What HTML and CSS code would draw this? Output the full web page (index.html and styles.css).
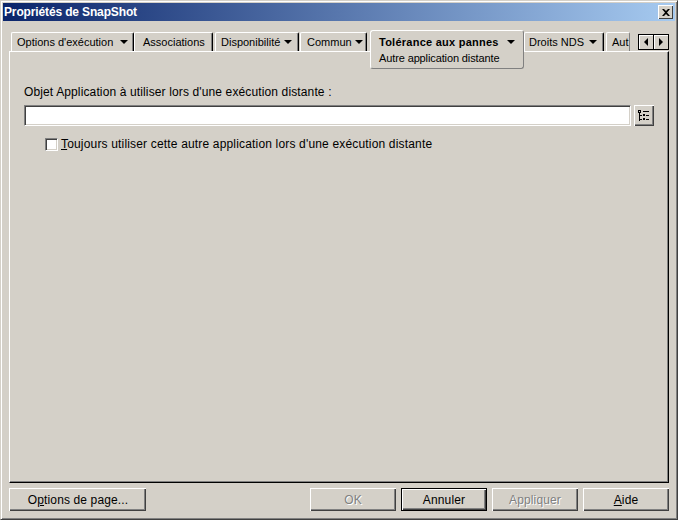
FILE: index.html
```html
<!DOCTYPE html>
<html lang="fr">
<head>
  <meta charset="UTF-8">
  <title>Propriétés de SnapShot</title>
  <link rel="stylesheet" href="styles.css">
</head>
<body>
  <div class="window">
    <div class="titlebar">
      <span class="title">Propriétés de SnapShot</span>
      <button class="close">
        <svg width="8" height="7" viewBox="0 0 8 7"><path d="M0 0h2l2 2 2-2h2L5 3.500 8 7H6L4 5 2 7H0l3-3.500z" fill="#000"/></svg>
      </button>
    </div>

    <div class="tabstrip">
      <div class="tab tab-exec">Options d'exécution<i class="arrow"></i></div>
      <div class="tab tab-assoc">Associations</div>
      <div class="tab tab-dispo">Disponibilité<i class="arrow"></i></div>
      <div class="tab tab-commun">Commun<i class="arrow"></i></div>
      <div class="tab-active">
        <div class="tab-active-name">Tolérance aux pannes<i class="arrow"></i></div>
        <div class="tab-active-sub">Autre application distante</div>
      </div>
      <div class="tab tab-droits">Droits NDS<i class="arrow"></i></div>
      <div class="tab tab-cut">Aut</div>
      <div class="scroller">
        <button class="scroll-btn"><i class="arrow-left"></i></button>
        <button class="scroll-btn"><i class="arrow-right"></i></button>
      </div>
    </div>

    <div class="panel">
      <div class="field-label">Objet Application à utiliser lors d'une exécution distante :</div>
      <div class="field-row">
        <div class="textbox"></div>
        <button class="browse">
          <svg width="12" height="12" viewBox="0 0 12 12" shape-rendering="crispEdges">
            <path d="M0 0h3v1H0zM0 2h3v1H0zM0 1h1v1H0zM2 1h1v1H2zM1 3h1v8H1zM2 5h2v1H2zM2 9h2v1H2z" fill="#000"/>
            <path d="M5 1h6v1H5zM5 4h2v2H5zM8 5h3v1H8zM5 8h2v2H5zM8 9h3v1H8z" fill="#000"/>
          </svg>
        </button>
      </div>
      <label class="check-row">
        <span class="checkbox"></span>
        <span class="check-text"><u>T</u>oujours utiliser cette autre application lors d'une exécution distante</span>
      </label>
    </div>

    <div class="footer">
      <button class="btn btn-page">O<u>p</u>tions de page...</button>
      <div class="footer-right">
        <button class="btn btn-disabled">OK</button>
        <button class="btn btn-default">Annuler</button>
        <button class="btn btn-disabled">Appliquer</button>
        <button class="btn"><u>A</u>ide</button>
      </div>
    </div>
  </div>
</body>
</html>
```

FILE: styles.css
```css
* {
  box-sizing: border-box;
}

html, body {
  margin: 0;
  padding: 0;
  height: 100%;
}

body {
  font-family: "Liberation Sans", Arial, sans-serif;
  font-size: 11px;
  color: #000;
  background: #d4d0c8;
  overflow: hidden;
}

button {
  font-family: inherit;
  font-size: 12px;
  letter-spacing: 0.13px;
  color: inherit;
  padding: 0;
  margin: 0;
}

.window {
  width: 678px;
  height: 520px;
  border: 1px solid;
  border-color: #d4d0c8 #404040 #404040 #d4d0c8;
  box-shadow: inset 1px 1px 0 #fff, inset -1px -1px 0 #808080;
  padding: 2px;
  display: flex;
  flex-direction: column;
}

/* title bar */
.titlebar {
  height: 18px;
  flex: none;
  background: linear-gradient(to right, #0a246a, #a6caf0);
  color: #fff;
  font-weight: bold;
  font-size: 12px;
  letter-spacing: -0.14px;
  display: flex;
  align-items: center;
  justify-content: space-between;
  padding: 0 2px 0 1px;
}

.close {
  width: 15px;
  height: 14px;
  background: #d4d0c8;
  border: none;
  box-shadow: inset 1px 1px 0 #fff, inset -1px -1px 0 #404040;
  display: flex;
  align-items: center;
  justify-content: center;
}

/* tabs */
.tabstrip {
  height: 30px;
  flex: none;
  display: flex;
  align-items: flex-end;
  padding-left: 8px;
  position: relative;
}

.tab {
  height: 19px;
  flex: none;
  display: flex;
  align-items: center;
  padding-left: 5px;
  padding-right: 1px;
  border-top: 1px solid #fff;
  border-left: 1px solid #fff;
  border-right: 1px solid #000;
  box-shadow: inset -1px 0 0 #808080;
  border-radius: 2px 2px 0 0;
  white-space: nowrap;
}

.tab-exec { width: 123px; }
.tab-assoc { width: 79px; margin-right: 2px; padding-left: 8px; }
.tab-dispo { width: 84px; margin-right: 1px; }
.tab-commun { width: 67px; margin-right: 3px; padding-left: 6px; }
.tab-droits { width: 80px; margin-right: 2px; padding-left: 4px; }
.tab-cut {
  width: 24px;
  overflow: hidden;
  border-right: 1px solid #808080;
  box-shadow: none;
}

.arrow {
  width: 0;
  height: 0;
  margin-left: auto;
  margin-right: 4px;
  border-left: 4px solid transparent;
  border-right: 4px solid transparent;
  border-top: 4px solid #000;
}

.tab-dispo .arrow, .tab-droits .arrow { margin-right: 5px; }
.tab-commun .arrow { margin-right: 2px; }

.tab-active {
  width: 154px;
  height: 39px;
  flex: none;
  align-self: flex-start;
  margin-top: 9px;
  position: relative;
  z-index: 2;
  background: #d4d0c8;
  border: 1px solid #fff;
  border-right: 1px solid #808080;
  border-bottom: 1px solid #808080;
  border-radius: 3px;
  padding: 3px 0 0 8px;
}

.tab-active-name {
  font-weight: bold;
  letter-spacing: 0.25px;
  display: flex;
  align-items: center;
  height: 15px;
}

.tab-active-name .arrow { margin-right: 8px; }

.tab-active-sub {
  margin-top: 3px;
  letter-spacing: -0.12px;
  white-space: nowrap;
}

.scroller {
  display: flex;
  margin-left: 8px;
  margin-bottom: 1px;
}

.scroll-btn {
  width: 16px;
  height: 16px;
  background: #d4d0c8;
  border: 1px solid #000;
  box-shadow: inset 1px 1px 0 #fff;
  display: flex;
  align-items: center;
  justify-content: center;
}

.scroll-btn + .scroll-btn {
  margin-left: -1px;
}

.arrow-left, .arrow-right {
  width: 0;
  height: 0;
  border-top: 4px solid transparent;
  border-bottom: 4px solid transparent;
}

.arrow-left { border-right: 4px solid #000; }
.arrow-right { border-left: 4px solid #000; }

/* main panel */
.panel {
  margin: 0 6px 0 6px;
  height: 432px;
  flex: none;
  border-top: 1px solid #fff;
  border-left: 1px solid #fff;
  border-right: 1px solid #000;
  border-bottom: 1px solid #000;
  box-shadow: inset -1px -1px 0 #808080;
  padding: 33px 0 0 14px;
  font-size: 12px;
  letter-spacing: 0.13px;
}

.field-label {
  height: 14px;
  line-height: 14px;
}

.field-row {
  display: flex;
  margin-top: 6px;
}

.textbox {
  width: 607px;
  height: 21px;
  background: #fff;
  border: 1px solid;
  border-color: #808080 #fff #fff #808080;
  box-shadow: inset 1px 1px 0 #404040, inset -1px -1px 0 #d4d0c8;
}

.browse {
  width: 20px;
  height: 21px;
  margin-left: 3px;
  background: #d4d0c8;
  border: none;
  box-shadow: inset 1px 1px 0 #fff, inset -1px -1px 0 #404040, inset -2px -2px 0 #808080;
  display: flex;
  align-items: center;
  justify-content: center;
}

.check-row {
  display: flex;
  align-items: center;
  margin: 11px 0 0 21px;
  height: 14px;
}

.check-text {
  letter-spacing: 0.17px;
}

.checkbox {
  width: 13px;
  height: 13px;
  background: #fff;
  border: 1px solid;
  border-color: #808080 #fff #fff #808080;
  box-shadow: inset 1px 1px 0 #404040, inset -1px -1px 0 #d4d0c8;
  margin-right: 3px;
}

/* bottom buttons */
.footer {
  display: flex;
  justify-content: space-between;
  margin: 5px 6px 0 6px;
}

.footer-right {
  display: flex;
  gap: 5px;
}

.btn {
  width: 86px;
  height: 23px;
  background: #d4d0c8;
  border: none;
  box-shadow: inset 1px 1px 0 #fff, inset -1px -1px 0 #404040, inset -2px -2px 0 #808080;
}

.btn-page {
  width: 137px;
  padding-left: 1px;
}

.btn-disabled {
  color: #808080;
  text-shadow: 1px 1px 0 #fff;
}

.btn-default {
  border: 1px solid #000;
}
```
